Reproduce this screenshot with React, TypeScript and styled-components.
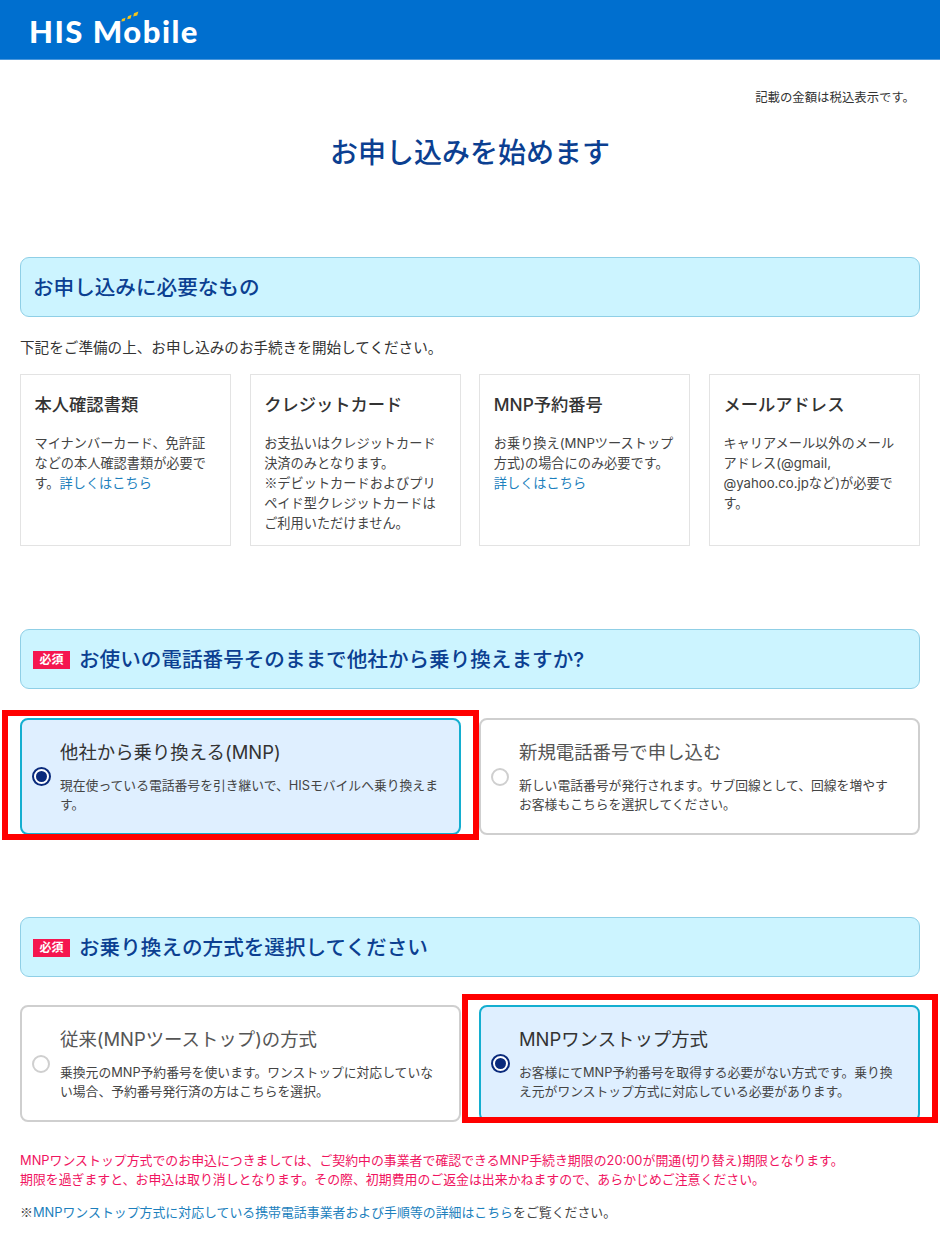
import React from "react";
import styled, { createGlobalStyle } from "styled-components";

const GlobalStyle = createGlobalStyle`
  html, body {
    margin: 0;
    padding: 0;
    background: #fff;
  }
  body {
    font-family: "Inter", "Noto Sans CJK JP", sans-serif;
    color: #333;
  }
`;

const Header = styled.header`
  height: 60px;
  box-sizing: border-box;
  background: #006fcf;
  border-bottom: 1px solid #4a97dc;
  padding-left: 29px;
  display: flex;
  align-items: center;
`;

const Logo = styled.div`
  position: relative;
  font-family: "Lato", "Noto Sans", sans-serif;
  font-weight: 900;
  font-size: 31px;
  line-height: 34px;
  letter-spacing: 1.5px;
  color: #fff;
  margin-top: 2px;
`;

const LogoMarks = styled.svg`
  position: absolute;
  left: 92px;
  top: -3px;
`;

const Main = styled.main`
  padding: 0 20px;
`;

const TaxNote = styled.p`
  margin: 0;
  padding: 29px 5px 0 0;
  text-align: right;
  font-size: 12.4px;
  line-height: 18px;
  color: #333;
`;

const Title = styled.h1`
  margin: 26px 0 0;
  text-align: center;
  font-size: 28px;
  line-height: 40px;
  font-weight: 500;
  color: #0b3f91;
`;

const SectionHead = styled.h2<{ $top: number }>`
  margin: ${(p) => p.$top}px 0 0;
  height: 60px;
  box-sizing: border-box;
  display: flex;
  align-items: center;
  gap: 9px;
  padding: 0 12px 2px;
  background: #ccf4ff;
  border: 1px solid #8fcfe6;
  border-radius: 9px;
  font-size: 20.6px;
  font-weight: 500;
  color: #0b3f91;
`;

const Required = styled.span`
  width: 37px;
  height: 18px;
  margin-top: 3px;
  background: #f5164f;
  color: #fff;
  font-size: 12px;
  font-weight: 700;
  line-height: 18px;
  text-align: center;
  flex: none;
`;

const Intro = styled.p`
  margin: 22px 0 0;
  font-size: 14.6px;
  line-height: 18px;
`;

const CardRow = styled.div`
  margin-top: 17px;
  display: grid;
  grid-template-columns: repeat(4, 1fr);
  gap: 18.6px;
`;

const Card = styled.div`
  height: 172px;
  box-sizing: border-box;
  border: 1px solid #e3e3e3;
  padding: 17px 14px 17px 13.5px;
`;

const CardTitle = styled.h3`
  margin: 0;
  font-size: 17.3px;
  line-height: 26px;
  font-weight: 500;
  color: #333;
`;

const CardText = styled.p`
  margin: 15px 0 0;
  font-size: 13.2px;
  line-height: 20px;
  color: #444;
  white-space: pre-line;
`;

const TextLink = styled.a`
  color: #1c7fbd;
  text-decoration: none;
`;

const Kome = styled.span`
  font-family: "Noto Sans CJK JP", sans-serif;
`;

const OptionRow = styled.div<{ $top: number }>`
  margin-top: ${(p) => p.$top}px;
  display: grid;
  grid-template-columns: 1fr 1fr;
  gap: 18px;
`;

const Option = styled.div<{ $selected?: boolean }>`
  position: relative;
  height: 117px;
  box-sizing: border-box;
  display: flex;
  align-items: center;
  padding: 0 18px 0 10px;
  gap: 9px;
  border-radius: 8px;
  border: 2px solid ${(p) => (p.$selected ? "#14aed0" : "#cfcfcf")};
  background: ${(p) => (p.$selected ? "#dfefff" : "#fff")};
`;

const Radio = styled.span<{ $selected?: boolean }>`
  width: ${(p) => (p.$selected ? "19px" : "18px")};
  height: ${(p) => (p.$selected ? "19px" : "18px")};
  margin-right: ${(p) => (p.$selected ? "0" : "1px")};
  box-sizing: border-box;
  flex: none;
  border-radius: 50%;
  border: 2px solid ${(p) => (p.$selected ? "#0a2a7c" : "#cfcfcf")};
  background: #fff;
  display: flex;
  align-items: center;
  justify-content: center;

  &::after {
    content: "";
    display: ${(p) => (p.$selected ? "block" : "none")};
    width: 11px;
    height: 11px;
    border-radius: 50%;
    background: #0a2a7c;
  }
`;

const OptionBody = styled.div`
  min-width: 0;
`;

const OptionTitle = styled.div<{ $selected?: boolean }>`
  font-size: 18.4px;
  line-height: 26px;
  font-weight: 400;
  color: ${(p) => (p.$selected ? "#333" : "#555")};
`;

const OptionText = styled.div`
  margin-top: 11px;
  font-size: 12.8px;
  line-height: 19.5px;
  color: #444;
`;

/* red annotation frame drawn over the screenshot */
const RedFrame = styled.div<{ $top: number; $bottom: number; $left: number }>`
  position: absolute;
  pointer-events: none;
  left: ${(p) => p.$left}px;
  right: -20px;
  top: ${(p) => p.$top}px;
  bottom: ${(p) => p.$bottom}px;
  border: 6px solid #ff0000;
`;

const Warning = styled.p`
  margin: 29px 0 0;
  font-size: 12.9px;
  line-height: 19px;
  color: #f0145f;
`;

const Reference = styled.p`
  margin: 13px 0 0;
  padding-bottom: 29px;
  font-size: 12.9px;
  line-height: 19.5px;
  color: #444;
`;

const cards = [
  {
    title: "本人確認書類",
    text: "マイナンバーカード、免許証などの本人確認書類が必要です。",
    link: true,
  },
  {
    title: "クレジットカード",
    text: "お支払いはクレジットカード決済のみとなります。",
    note: "デビットカードおよびプリペイド型クレジットカードはご利用いただけません。",
  },
  {
    title: "MNP予約番号",
    text: "お乗り換え(MNPツーストップ方式)の場合にのみ必要です。",
    link: true,
  },
  {
    title: "メールアドレス",
    text: "キャリアメール以外のメールアドレス(@gmail, @yahoo.co.jpなど)が必要です。",
  },
];

export default function App() {
  return (
    <>
      <GlobalStyle />
      <Header>
        <Logo>
          HIS Mobile
          <LogoMarks width="18" height="11" viewBox="0 0 18 11">
            <path d="M1 8 L4.5 6.8 L3.6 10 L0.4 10.6 Z" fill="#f5c518" />
            <path d="M7 5.2 L10.6 3.8 L9.6 7.4 L6.2 8.2 Z" fill="#f5c518" />
            <path d="M13 2.2 L17.4 0.4 L16.2 4.4 L12.2 5.6 Z" fill="#f5c518" />
          </LogoMarks>
        </Logo>
      </Header>
      <Main>
        <TaxNote>記載の金額は税込表示です。</TaxNote>
        <Title>お申し込みを始めます</Title>

        <SectionHead $top={84}>お申し込みに必要なもの</SectionHead>
        <Intro>下記をご準備の上、お申し込みのお手続きを開始してください。</Intro>
        <CardRow>
          {cards.map((c) => (
            <Card key={c.title}>
              <CardTitle>{c.title}</CardTitle>
              <CardText>
                {c.text}
                {c.link && <TextLink href="#">詳しくはこちら</TextLink>}
                {c.note && (
                  <>
                    {"\n"}
                    <Kome>※</Kome>
                    {c.note}
                  </>
                )}
              </CardText>
            </Card>
          ))}
        </CardRow>

        <SectionHead $top={83}>
          <Required>必須</Required>
          お使いの電話番号そのままで他社から乗り換えますか?
        </SectionHead>
        <OptionRow $top={29}>
          <Option $selected>
            <Radio $selected />
            <OptionBody>
              <OptionTitle $selected>他社から乗り換える(MNP)</OptionTitle>
              <OptionText>
                現在使っている電話番号を引き継いで、HISモバイルへ乗り換えます。
              </OptionText>
            </OptionBody>
            <RedFrame $top={-10} $bottom={-7} $left={-20} />
          </Option>
          <Option>
            <Radio />
            <OptionBody>
              <OptionTitle>新規電話番号で申し込む</OptionTitle>
              <OptionText>
                新しい電話番号が発行されます。サブ回線として、回線を増やすお客様もこちらを選択してください。
              </OptionText>
            </OptionBody>
          </Option>
        </OptionRow>

        <SectionHead $top={82}>
          <Required>必須</Required>
          お乗り換えの方式を選択してください
        </SectionHead>
        <OptionRow $top={28}>
          <Option>
            <Radio />
            <OptionBody>
              <OptionTitle>従来(MNPツーストップ)の方式</OptionTitle>
              <OptionText>
                乗換元のMNP予約番号を使います。ワンストップに対応していない場合、予約番号発行済の方はこちらを選択。
              </OptionText>
            </OptionBody>
          </Option>
          <Option $selected>
            <Radio $selected />
            <OptionBody>
              <OptionTitle $selected>MNPワンストップ方式</OptionTitle>
              <OptionText>
                お客様にてMNP予約番号を取得する必要がない方式です。乗り換え元がワンストップ方式に対応している必要があります。
              </OptionText>
            </OptionBody>
            <RedFrame $top={-13} $bottom={-3} $left={-19} />
          </Option>
        </OptionRow>

        <Warning>
          MNPワンストップ方式でのお申込につきましては、ご契約中の事業者で確認できるMNP手続き期限の20:00が開通(切り替え)期限となります。
          <br />
          期限を過ぎますと、お申込は取り消しとなります。その際、初期費用のご返金は出来かねますので、あらかじめご注意ください。
        </Warning>
        <Reference>
          <Kome>※</Kome>
          <TextLink href="#">MNPワンストップ方式に対応している携帯電話事業者および手順等の詳細はこちら</TextLink>をご覧ください。
        </Reference>
      </Main>
    </>
  );
}
